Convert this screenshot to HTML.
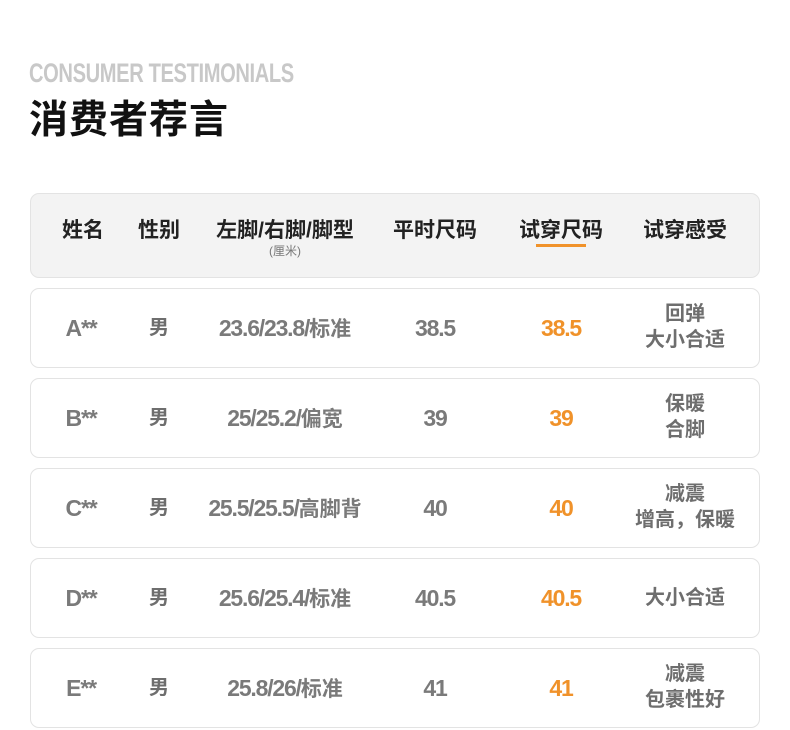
<!DOCTYPE html>
<html><head><meta charset="utf-8"><style>
*{margin:0;padding:0;box-sizing:border-box}
body{width:790px;height:730px;background:#fff;position:relative;overflow:hidden;font-family:"Liberation Sans","Noto Sans CJK SC",sans-serif}
.en{position:absolute;left:29px;top:58px;font-size:27px;font-weight:bold;color:#c8c8c8;transform:scaleX(0.745);transform-origin:left top;letter-spacing:-0.5px;white-space:nowrap}
.zh{position:absolute;left:29px;top:89px;font-size:39px;font-weight:bold;color:#111;letter-spacing:1px}
.box{position:absolute;left:30px;width:730px;border:1px solid #e3e3e3;border-radius:9px;background:#fff}
.head{top:193px;height:85px;background:#f3f3f3}
.c{position:absolute;transform:translateX(-50%);text-align:center;white-space:nowrap}
.h{top:20px;font-size:21px;font-weight:bold;color:#222}
.sub{top:48px;font-size:12px;color:#777}
.r{height:80px}
.v{top:50%;font-size:21px;font-weight:bold;color:#7a7a7a;margin-top:-15px;line-height:30px}
.n{font-size:23px;letter-spacing:-1.2px}
.o{color:#f0922a}
.f{font-size:20px;line-height:26px;color:#6e6e6e;font-weight:bold;margin-top:-13px}
.two{margin-top:-27px}
</style></head><body>
<div class="en">CONSUMER TESTIMONIALS</div>
<div class="zh">消费者荐言</div>
<div class="box head">
<div class="c h" style="left:52px">姓名</div>
<div class="c h" style="left:128px">性别</div>
<div class="c h" style="left:254px">左脚/右脚/脚型</div>
<div class="c sub" style="left:254px">(厘米)</div>
<div class="c h" style="left:404px">平时尺码</div>
<div class="c h" style="left:530px">试穿尺码</div>
<div style="position:absolute;left:505px;top:50px;width:50px;height:3px;background:#f0922a"></div>
<div class="c h" style="left:654px">试穿感受</div>
</div>

<div class="box r" style="top:288px">
<div class="c v" style="left:50px"><span class="n">A**</span></div>
<div class="c v f" style="left:128px">男</div>
<div class="c v" style="left:254px"><span class="n">23.6/23.8/</span>标准</div>
<div class="c v" style="left:404px"><span class="n">38.5</span></div>
<div class="c v o" style="left:530px"><span class="n">38.5</span></div>
<div class="c v f two" style="left:654px">回弹<br>大小合适</div>
</div>
<div class="box r" style="top:378px">
<div class="c v" style="left:50px"><span class="n">B**</span></div>
<div class="c v f" style="left:128px">男</div>
<div class="c v" style="left:254px"><span class="n">25/25.2/</span>偏宽</div>
<div class="c v" style="left:404px"><span class="n">39</span></div>
<div class="c v o" style="left:530px"><span class="n">39</span></div>
<div class="c v f two" style="left:654px">保暖<br>合脚</div>
</div>
<div class="box r" style="top:468px">
<div class="c v" style="left:50px"><span class="n">C**</span></div>
<div class="c v f" style="left:128px">男</div>
<div class="c v" style="left:254px"><span class="n">25.5/25.5/</span>高脚背</div>
<div class="c v" style="left:404px"><span class="n">40</span></div>
<div class="c v o" style="left:530px"><span class="n">40</span></div>
<div class="c v f two" style="left:654px">减震<br>增高，保暖</div>
</div>
<div class="box r" style="top:558px">
<div class="c v" style="left:50px"><span class="n">D**</span></div>
<div class="c v f" style="left:128px">男</div>
<div class="c v" style="left:254px"><span class="n">25.6/25.4/</span>标准</div>
<div class="c v" style="left:404px"><span class="n">40.5</span></div>
<div class="c v o" style="left:530px"><span class="n">40.5</span></div>
<div class="c v f" style="left:654px">大小合适</div>
</div>
<div class="box r" style="top:648px">
<div class="c v" style="left:50px"><span class="n">E**</span></div>
<div class="c v f" style="left:128px">男</div>
<div class="c v" style="left:254px"><span class="n">25.8/26/</span>标准</div>
<div class="c v" style="left:404px"><span class="n">41</span></div>
<div class="c v o" style="left:530px"><span class="n">41</span></div>
<div class="c v f two" style="left:654px">减震<br>包裹性好</div>
</div>
</body></html>
